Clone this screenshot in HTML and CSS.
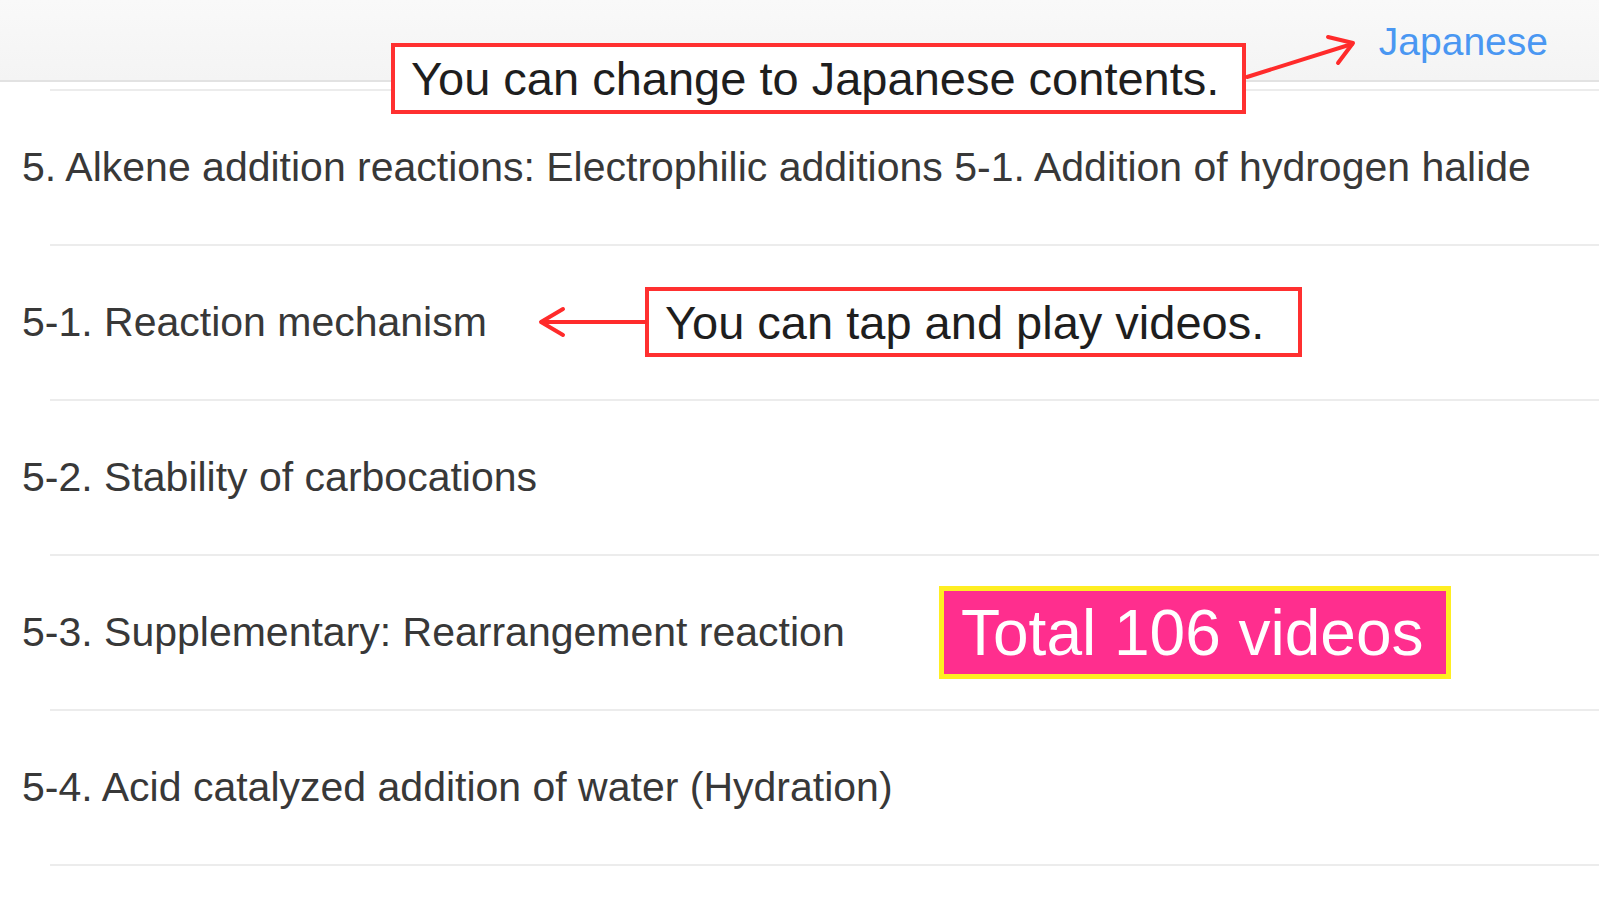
FILE: index.html
```html
<!DOCTYPE html>
<html lang="en">
<head>
<meta charset="utf-8">
<title>Alkene addition reactions</title>
<link rel="stylesheet" href="styles.css">
</head>
<body>
<div class="page">
  <header class="navbar">
    <a class="lang-link" href="#">Japanese</a>
  </header>
  <ul class="list">
    <li class="row">5. Alkene addition reactions: Electrophilic additions 5-1. Addition of hydrogen halide</li>
    <li class="row">5-1. Reaction mechanism</li>
    <li class="row">5-2. Stability of carbocations</li>
    <li class="row">5-3. Supplementary: Rearrangement reaction</li>
    <li class="row">5-4. Acid catalyzed addition of water (Hydration)</li>
  </ul>

  <div class="callout callout-lang">You can change to Japanese contents.</div>
  <div class="callout callout-play">You can tap and play videos.</div>
  <div class="badge">Total 106 videos</div>

  <svg class="arrows" width="1599" height="900" viewBox="0 0 1599 900">
    <g fill="none" stroke="#ff2b2b" stroke-width="4" stroke-linecap="round" stroke-linejoin="round">
      <line x1="1247" y1="77" x2="1352" y2="44"/>
      <polyline points="1328,37 1353,43 1338,63"/>
      <line x1="645" y1="322" x2="542" y2="322"/>
      <polyline points="563,309 541,322 563,335"/>
    </g>
  </svg>
</div>
</body>
</html>
```

FILE: styles.css
```css
html, body {
  margin: 0;
  padding: 0;
  background: #ffffff;
}

body {
  font-family: "Liberation Sans", Arial, sans-serif;
  color: #383838;
}

.page {
  position: relative;
  width: 1599px;
  height: 900px;
  overflow: hidden;
}

.navbar {
  height: 80px;
  background: linear-gradient(#f9f9f9, #f4f4f4);
  border-bottom: 2px solid #e2e2e2;
  display: flex;
  justify-content: flex-end;
  align-items: flex-start;
  padding-right: 51px;
}

.lang-link {
  font-size: 39px;
  line-height: 1;
  color: #4a97f2;
  text-decoration: none;
  margin-top: 22px;
}

.list {
  list-style: none;
  margin: 7px 0 0 0;
  padding: 0;
}

.list::before {
  content: "";
  display: block;
  height: 2px;
  margin-left: 50px;
  background: #ececec;
}

.row {
  box-sizing: border-box;
  height: 155px;
  padding: 0 0 2px 22px;
  display: flex;
  align-items: center;
  font-size: 41px;
  white-space: nowrap;
  background: linear-gradient(#ececec, #ececec) no-repeat 50px 100% / calc(100% - 50px) 2px;
}

.callout {
  position: absolute;
  box-sizing: border-box;
  border: 4px solid #ff3030;
  background: #ffffff;
  color: #1e1e1e;
  font-size: 47px;
  display: flex;
  align-items: center;
  padding-left: 16px;
  white-space: nowrap;
}

.callout-lang {
  left: 391px;
  top: 43px;
  width: 855px;
  height: 71px;
}

.callout-play {
  left: 645px;
  top: 287px;
  width: 657px;
  height: 70px;
}

.badge {
  position: absolute;
  box-sizing: border-box;
  left: 939px;
  top: 586px;
  width: 512px;
  height: 93px;
  border: 5px solid #ffee22;
  background: #ff2e8e;
  color: #ffffff;
  font-size: 64px;
  display: flex;
  align-items: center;
  padding-left: 17px;
  white-space: nowrap;
}

.arrows {
  position: absolute;
  left: 0;
  top: 0;
  pointer-events: none;
}
```
